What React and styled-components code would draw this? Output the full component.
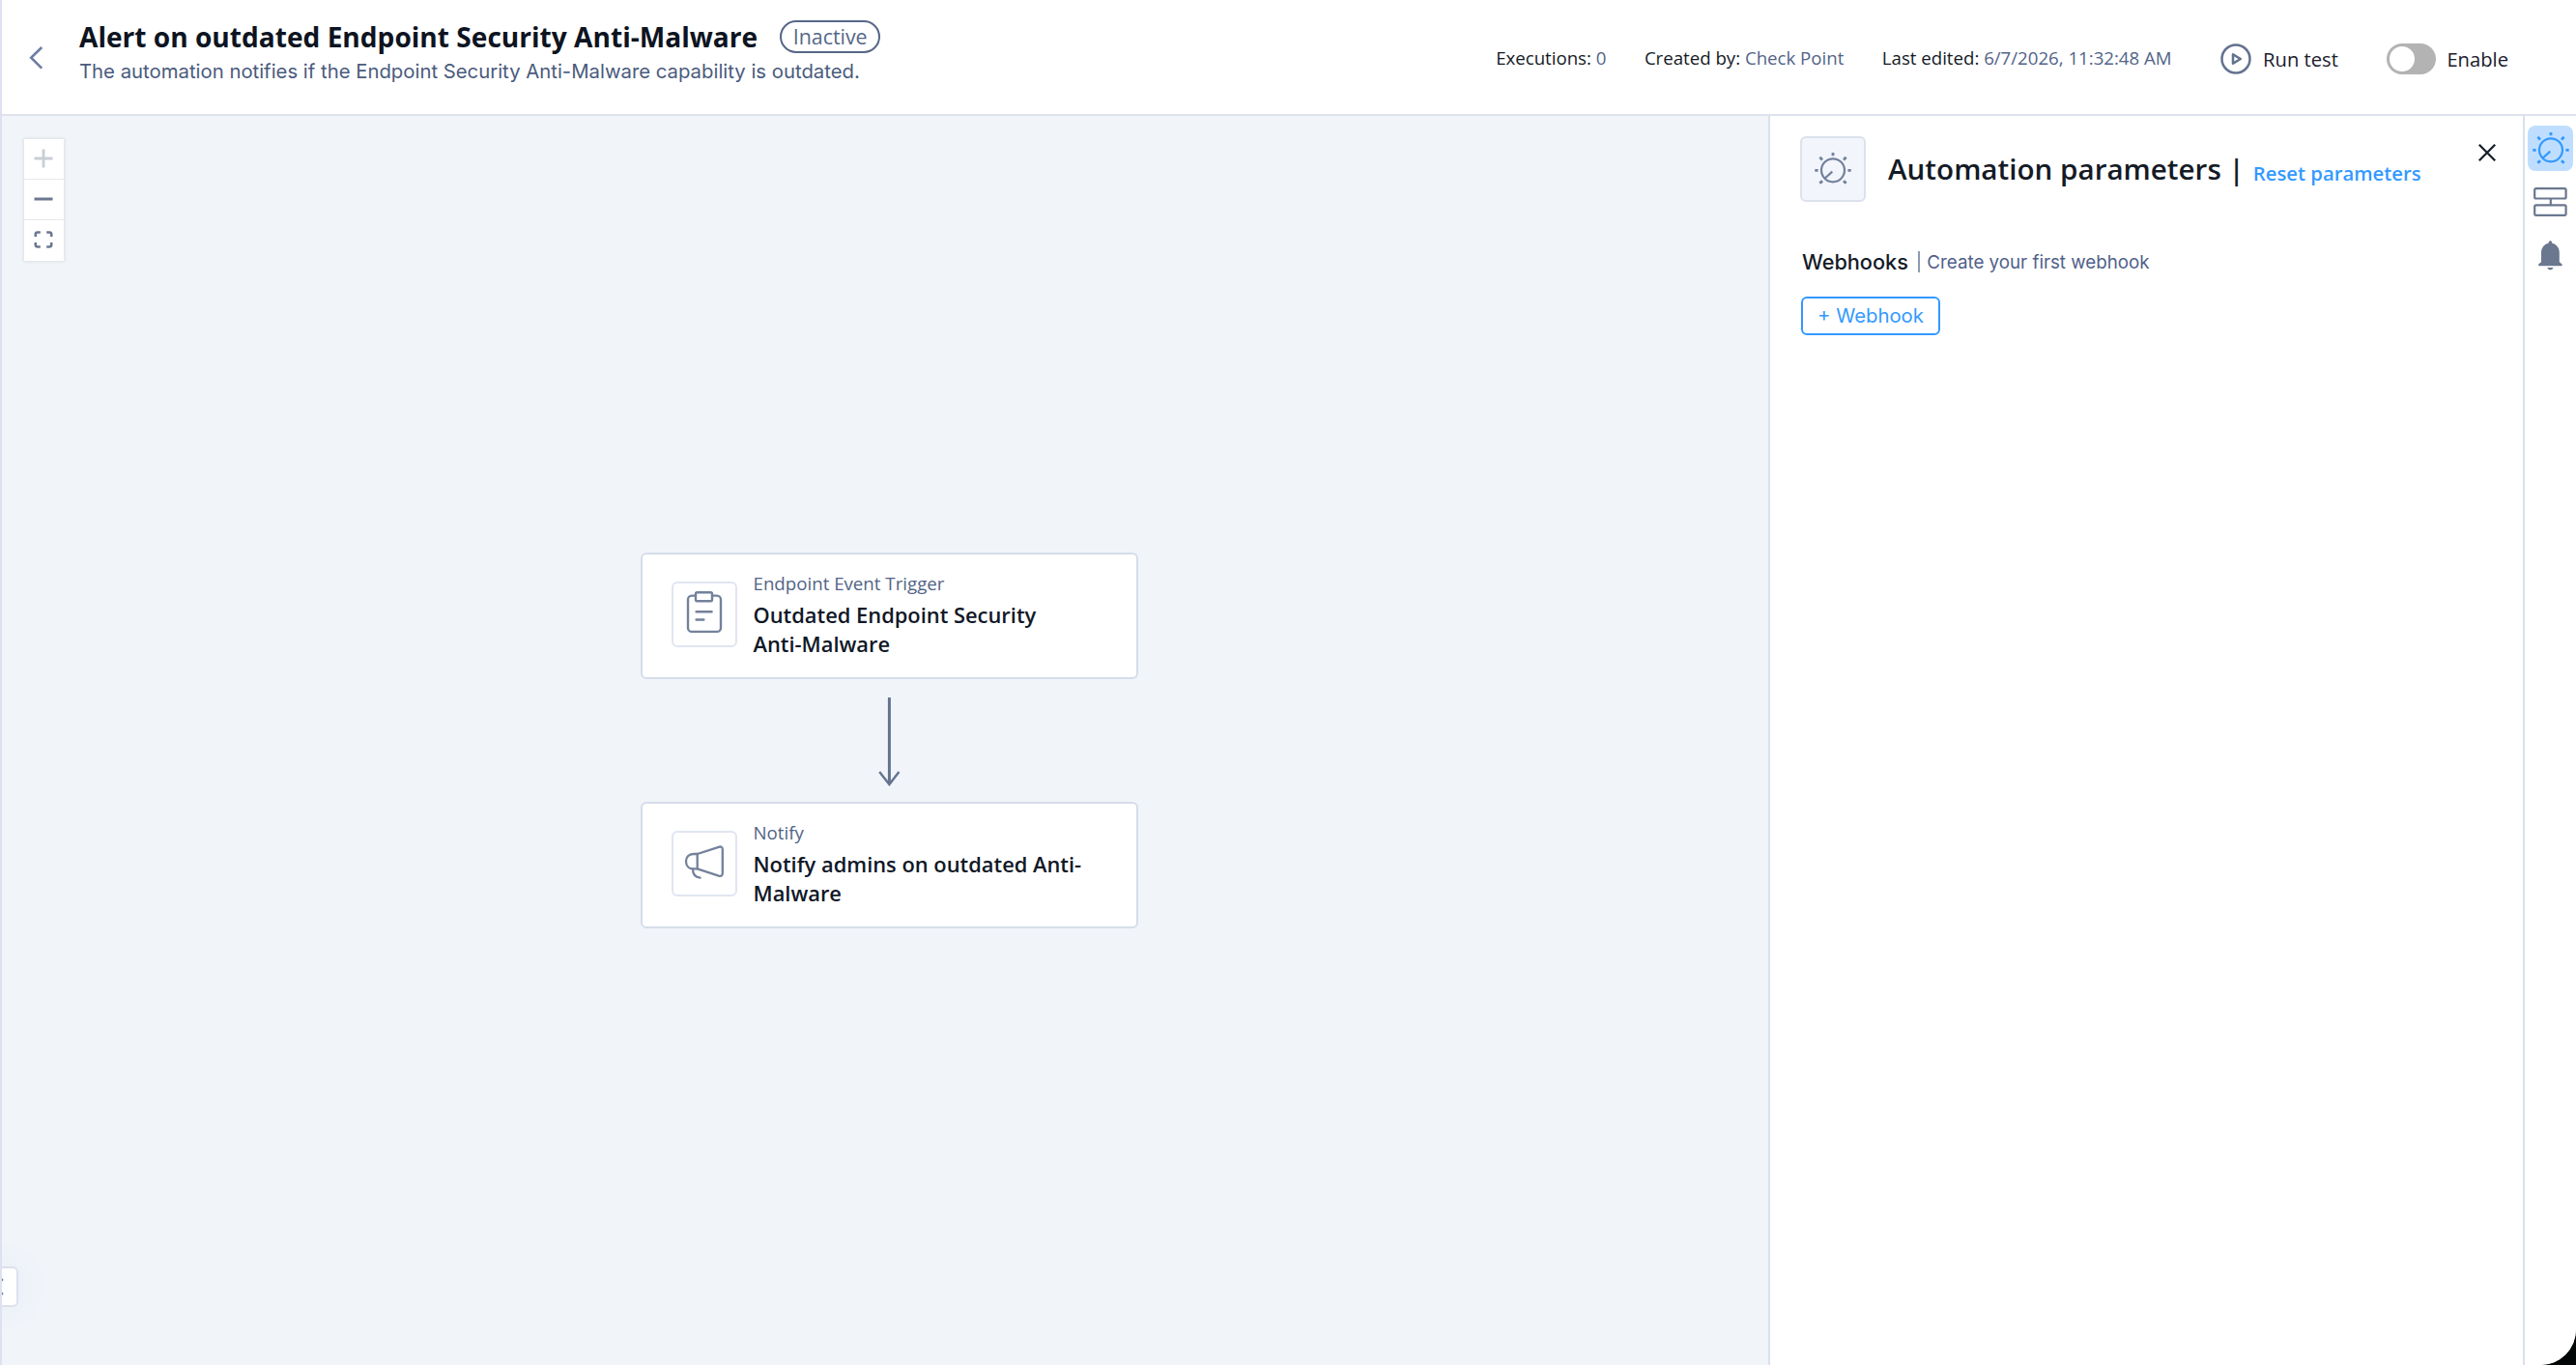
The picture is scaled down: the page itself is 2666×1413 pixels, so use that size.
import React from "react"
import styled, { createGlobalStyle } from "styled-components"

const GlobalStyle = createGlobalStyle`
  * {
    box-sizing: border-box;
  }

  body {
    margin: 0;
    background: #020607;
    font-family: "Open Sans", "Noto Sans", sans-serif;
    color: #141a26;
  }

  button {
    font: inherit;
    padding: 0;
    border: 0;
    background: none;
  }

  svg {
    display: block;
    flex: none;
    overflow: visible;
  }
`

const Shell = styled.div`
  display: flex;
  flex-direction: column;
  width: 2666px;
  height: 1413px;
  overflow: hidden;
  background: white;
  border-left: 2px solid #dde1f0;
  border-bottom-right-radius: 37px;
`

const HeaderBar = styled.header`
  display: flex;
  align-items: flex-start;
  height: 120px;
  border-bottom: 2px solid #dde2ed;
`

const BackButton = styled.button`
  width: 80px;
  padding: 47.5px 0 0 28px;
`

const Heading = styled.div`
  display: flex;
  flex-direction: column;
  gap: 4px;
  padding-top: 18.5px;
`

const TitleRow = styled.div`
  display: flex;
  align-items: center;
  gap: 23px;
`

const Title = styled.h1`
  margin: 0;
  font-size: 28.1px;
  line-height: 38px;
  font-weight: 700;
  white-space: nowrap;
  color: #0d1421;
`

const Badge = styled.span`
  width: 104px;
  height: 34px;
  margin-top: 1px;
  border: 2px solid #566787;
  border-radius: 17px;
  text-align: center;
  font-size: 21.4px;
  line-height: 30px;
  color: #566787;
`

const Subtitle = styled.p`
  margin: 0;
  font-family: Inter, sans-serif;
  font-size: 20.32px;
  line-height: 26px;
  white-space: nowrap;
  color: #4a5b7d;
`

const HeaderSide = styled.div`
  display: flex;
  align-items: center;
  height: 118px;
  margin-left: auto;
  padding: 4px 70px 0 0;
  white-space: nowrap;
`

const Meta = styled.div`
  display: flex;
  gap: 39.5px;
  margin: -3px 50px 0 0;
  font-size: 18.65px;
`

const MetaValue = styled.span`
  color: #526488;
`

const Action = styled.button`
  display: flex;
  align-items: center;
  gap: ${props => props.$gap}px;
  margin-left: ${props => props.$offset || 0}px;
  font-size: 20.2px;
  line-height: 28px;
  color: #1a202c;
`

const Track = styled.span`
  width: 51px;
  height: 32px;
  padding: 3px;
  border-radius: 16px;
  background: #b3b3b3;
`

const Knob = styled.span`
  display: block;
  width: 26px;
  height: 26px;
  border-radius: 50%;
  background: white;
`

const Main = styled.main`
  display: flex;
  flex: 1;
  min-height: 0;
`

const Canvas = styled.section`
  position: relative;
  flex: 1;
  background: #f1f5fa;
`

const Controls = styled.div`
  position: absolute;
  top: 23.5px;
  left: 22.5px;
  width: 41px;
  background: white;
  box-shadow: 0 0 3px 1px rgba(0, 0, 0, 0.09);
`

const ControlButton = styled.button`
  display: flex;
  align-items: center;
  justify-content: center;
  width: 41px;
  height: 42px;
  color: #6b7890;
  border-bottom: 1px solid #e6e8ec;

  &:disabled {
    color: #c8cdd6;
  }

  &:last-child {
    padding-bottom: 2px;
    border-bottom: 0;
  }
`

const Node = styled.article`
  position: absolute;
  left: 661px;
  top: ${props => props.$top}px;
  display: flex;
  gap: 16.5px;
  width: 515px;
  height: 131px;
  padding: 0 0 0 30px;
  background: white;
  border: 2px solid #d5dde9;
  border-radius: 6px;
`

const IconTile = styled.div`
  display: flex;
  align-items: center;
  justify-content: center;
  flex: none;
  width: 68px;
  height: 68px;
  margin-top: ${props => (props.$filled ? 0 : 28)}px;
  border: 2px solid ${props => (props.$filled ? "#dce1ed" : "#e1e5f2")};
  border-radius: 6px;
  background: ${props => (props.$filled ? "#f2f5fb" : "white")};
  color: #73819b;
`

const NodeText = styled.div`
  width: 345px;
  padding-top: 17px;
`

const NodeKind = styled.div`
  font-size: 18.7px;
  line-height: 26px;
  color: #526486;
`

const NodeTitle = styled.div`
  margin-top: 5px;
  font-size: 21.87px;
  line-height: 30px;
  font-weight: 600;
  color: #111827;
`

const Edge = styled.svg`
  position: absolute;
  left: 906px;
  top: 602px;
`

const CollapseTab = styled.button`
  position: absolute;
  left: -12px;
  top: 1191px;
  width: 29px;
  height: 42px;
  background: white;
  border: 2px solid #dde1ee;
  border-radius: 6px;
  box-shadow: 0 0 32px rgba(95, 115, 190, 0.09);
  color: #6c7ba3;
`

const Panel = styled.aside`
  width: 781px;
  padding: 21px 28px 0 31px;
  border-left: 2px solid #dbe0ee;
  background: white;
`

const PanelHead = styled.div`
  display: flex;
  align-items: flex-start;
`

const PanelTitle = styled.h2`
  display: flex;
  align-items: baseline;
  margin: 14px auto 0 23px;
  font-size: 29.6px;
  line-height: 40px;
  font-weight: 600;
  white-space: pre;
`

const ResetLink = styled.a`
  position: relative;
  top: 1px;
  margin-left: 9px;
  font-size: 20.3px;
  color: #3399ff;
`

const CloseButton = styled.button`
  margin-top: 8px;
  color: #1a202c;
`

const SectionRow = styled.div`
  display: flex;
  align-items: center;
  height: 26px;
  margin: 49px 0 23px 2px;
  font-family: Inter, sans-serif;
`

const SectionTitle = styled.h3`
  margin: 0;
  font-size: 21.7px;
  font-weight: 500;
`

const SectionHint = styled.span`
  margin-left: 10px;
  font-size: 18.75px;
  color: #50618a;
`

const Divider = styled.span`
  width: 2px;
  height: 22px;
  margin-left: 10px;
  background: #8f9ab0;

  & + ${SectionHint} {
    margin-left: 7.5px;
  }
`

const OutlineButton = styled.button`
  width: 144px;
  height: 40px;
  margin-left: 1px;
  border: 2px solid #3399ff;
  border-radius: 6px;
  font-family: Inter, sans-serif;
  font-size: 20.3px;
  line-height: 34px;
  color: #3399ff;
`

const Rail = styled.nav`
  display: flex;
  flex-direction: column;
  align-items: center;
  width: 55px;
  padding: 10px 0 0;
  border-left: 2px solid #dbe0ee;
  background: white;
  color: #6a778f;
`

const RailItem = styled.button`
  display: flex;
  align-items: center;
  justify-content: center;
  width: 47px;
  height: 47px;
  margin-bottom: ${props => props.$gap}px;
  border-radius: 8px;
  background: ${props => (props.$active ? "#bfdeff" : "transparent")};
  color: ${props => (props.$active ? "#3399ff" : "#6a778f")};
`

const Knobs = () => (
  <svg width="40" height="40" viewBox="0 0 40 40" fill="none" stroke="currentColor" strokeWidth="2.2">
    <circle cx="20" cy="21.3" r="12" />
    <path d="M11.5 29.8L19.3 22.6" />
    <path
      strokeWidth="2.8"
      d="M20 3V6.2M1.3 21.3H4.6M35.4 21.3H38.7M6.4 7.8L9 10.4M33.6 7.8L31 10.4M6.4 34.8L9 32.2M33.6 34.8L31 32.2"
    />
  </svg>
)

const Clipboard = () => (
  <svg width="48" height="48" viewBox="0 0 48 48" fill="none" stroke="currentColor" strokeWidth="2.4" strokeLinecap="round">
    <path d="M15 4.6H11A4 4 0 0 0 7 8.6V37.9A4 4 0 0 0 11 41.9H37A4 4 0 0 0 41 37.9V8.6A4 4 0 0 0 37 4.6H32" />
    <rect x="15" y="1.3" width="17" height="9" rx="1.5" />
    <path d="M15.6 21.2H31.6M15.6 29.5H23.4" />
  </svg>
)

const Megaphone = () => (
  <svg width="48" height="48" viewBox="0 0 48 48" fill="none" stroke="currentColor" strokeWidth="2.3" strokeLinecap="round" strokeLinejoin="round">
    <path d="M16.7 14L38.8 6.8Q42.8 5.6 42.8 9.6V33.6Q42.8 37.8 38.8 36.6L16.7 29.4H12.7C7.7 29.4 5 26 5 21.7C5 17.4 7.7 14 12.7 14Z" />
    <path d="M16.7 14V29.4M12 29.6C12 35 14.6 38.2 19.6 38.6" />
  </svg>
)

const steps = [
  { kind: "Endpoint Event Trigger", title: "Outdated Endpoint Security Anti-Malware", top: 452, Icon: Clipboard },
  { kind: "Notify", title: "Notify admins on outdated Anti-Malware", top: 710, Icon: Megaphone },
]

const Header = () => (
  <HeaderBar>
    <BackButton aria-label="Back">
      <svg width="15" height="24" viewBox="0 0 15 24" fill="none" stroke="#6e7da3" strokeWidth="2.6">
        <path d="M13.2 1L2.2 11.8L13.2 22.6" />
      </svg>
    </BackButton>
    <Heading>
      <TitleRow>
        <Title>Alert on outdated Endpoint Security Anti-Malware</Title>
        <Badge>Inactive</Badge>
      </TitleRow>
      <Subtitle>
        The automation notifies if the Endpoint Security Anti-Malware capability is outdated.
      </Subtitle>
    </Heading>
    <HeaderSide>
      <Meta>
        <span>
          Executions: <MetaValue>0</MetaValue>
        </span>
        <span>
          Created by: <MetaValue>Check Point</MetaValue>
        </span>
        <span>
          Last edited: <MetaValue>6/7/2026, 11:32:48 AM</MetaValue>
        </span>
      </Meta>
      <Action $gap={12.5}>
        <svg width="32" height="32" viewBox="0 0 32 32" fill="none" stroke="#63728f" strokeWidth="2.5">
          <circle cx="16" cy="16" r="14.5" />
          <path strokeLinejoin="round" d="M13 11.2V20.8L20.8 16Z" />
        </svg>
        Run test
      </Action>
      <Action $gap={11.5} $offset={50}>
        <Track>
          <Knob />
        </Track>
        Enable
      </Action>
    </HeaderSide>
  </HeaderBar>
)

const Flow = () => (
  <Canvas>
    <Controls>
      <ControlButton disabled aria-label="Zoom in">
        <svg width="20" height="20" viewBox="0 0 20 20" stroke="currentColor" strokeWidth="2.8">
          <path d="M.5 10H19.5M10 .5V19.5" />
        </svg>
      </ControlButton>
      <ControlButton aria-label="Zoom out">
        <svg width="20" height="20" viewBox="0 0 20 20" stroke="currentColor" strokeWidth="3">
          <path d="M.5 10H19.5" />
        </svg>
      </ControlButton>
      <ControlButton aria-label="Fit view">
        <svg width="20" height="18" viewBox="0 0 20 18" fill="none" stroke="currentColor" strokeWidth="2.6">
          <path d="M1.8 6V3.6Q1.8 1.5 3.9 1.5H6.8M13.2 1.5H16.1Q18.2 1.5 18.2 3.6V6M1.8 12V14.4Q1.8 16.5 3.9 16.5H6.8M13.2 16.5H16.1Q18.2 16.5 18.2 14.4V12" />
        </svg>
      </ControlButton>
    </Controls>
    {steps.map(({ kind, title, top, Icon }) => (
      <Node key={kind} $top={top}>
        <IconTile>
          <Icon />
        </IconTile>
        <NodeText>
          <NodeKind>{kind}</NodeKind>
          <NodeTitle>{title}</NodeTitle>
        </NodeText>
      </Node>
    ))}
    <Edge width="24" height="92" viewBox="0 0 24 92" fill="none" stroke="#64738f">
      <path strokeWidth="3" d="M12.4 0V89" />
      <path strokeWidth="2.4" d="M2.2 77L12.4 90L22.4 77" />
    </Edge>
    <CollapseTab aria-label="Collapse">
      <svg width="12" height="18" viewBox="0 0 12 18" fill="none" stroke="currentColor" strokeWidth="2.6">
        <path d="M10.8 1L2 9L10.8 17" />
      </svg>
    </CollapseTab>
  </Canvas>
)

const Parameters = () => (
  <Panel>
    <PanelHead>
      <IconTile $filled>
        <Knobs />
      </IconTile>
      <PanelTitle>
        Automation parameters |<ResetLink>Reset parameters</ResetLink>
      </PanelTitle>
      <CloseButton aria-label="Close">
        <svg width="18" height="18" viewBox="0 0 18 18" stroke="currentColor" strokeWidth="2.3">
          <path d="M.8 .8L17.2 17.2M17.2 .8L.8 17.2" />
        </svg>
      </CloseButton>
    </PanelHead>
    <SectionRow>
      <SectionTitle>Webhooks</SectionTitle>
      <Divider />
      <SectionHint>Create your first webhook</SectionHint>
    </SectionRow>
    <OutlineButton>+ Webhook</OutlineButton>
  </Panel>
)

const App = () => (
  <>
    <GlobalStyle />
    <Shell>
      <Header />
      <Main>
        <Flow />
        <Parameters />
        <Rail>
          <RailItem $active $gap={8}>
            <Knobs />
          </RailItem>
          <RailItem $gap={9}>
            <svg width="35" height="30" viewBox="0 0 35 30" fill="none" stroke="currentColor" strokeWidth="2.2">
              <rect x="1.2" y="1.1" width="32.4" height="10.4" rx="1.5" />
              <rect x="1.2" y="18.4" width="32.4" height="10.4" rx="1.5" />
              <path d="M17.8 11.5V18.4" />
            </svg>
          </RailItem>
          <RailItem $gap={0}>
            <svg width="25" height="31" viewBox="0 0 25 31" fill="currentColor">
              <path d="M12.4 .2C13.4 .2 14.1 1 14.1 1.9V2.8C18.8 3.8 21.8 7.6 21.8 12.5V22.3L24.6 24.4V26.2H.2V24.4L3 22.3V12.5C3 7.6 6 3.8 10.7 2.8V1.9C10.7 1 11.4 .2 12.4 .2Z" />
              <path d="M9.2 28H15.6Q14.8 30.4 12.4 30.4T9.2 28Z" />
            </svg>
          </RailItem>
        </Rail>
      </Main>
    </Shell>
  </>
)

export default App
